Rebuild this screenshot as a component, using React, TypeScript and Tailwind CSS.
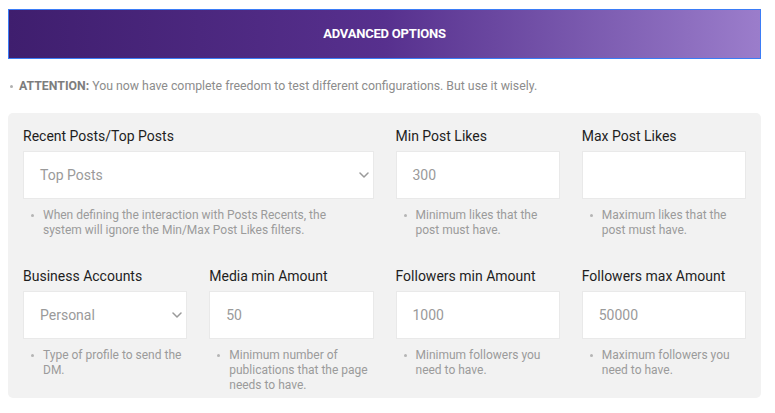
import React from 'react'

const font = { fontFamily: 'Roboto, "Noto Sans", sans-serif' }

function Chevron(){
  return (
    <svg width="10" height="6" viewBox="0 0 10 6" className="shrink-0">
      <path d="M1 1l4 4 4-4" fill="none" stroke="#9a9a9a" strokeWidth="1.5" strokeLinecap="round" strokeLinejoin="round"/>
    </svg>
  )
}

function Help({lines, narrow}:{lines:string; narrow?:boolean}){
  return (
    <div className="flex mt-[9px] pl-[8px] text-[12px] leading-[15px] text-[#9b9b9b]">
      <span className="w-[12px] shrink-0 pt-[6px]"><span className="block w-[3px] h-[3px] rounded-full bg-[#b5b5b5]"/></span>
      <span className={narrow ? 'max-w-[296px]' : ''}>{lines}</span>
    </div>
  )
}

type Field = { label:string; value?:string; select?:boolean; help:string; span?:boolean }

function FieldBox({f}:{f:Field}){
  return (
    <div className={f.span ? 'col-span-2' : ''}>
      <div className="text-[14px] leading-[20px] text-[#1e1e1e] mb-[5px] whitespace-nowrap">{f.label}</div>
      <div className="h-[48px] bg-white border border-[#e9e9e9] flex items-center pl-[16px] pr-[4px]">
        <span className="flex-1 text-[14px] text-[#9a9a9a]">{f.value}</span>
        {f.select && <Chevron/>}
      </div>
      <Help lines={f.help} narrow={f.span}/>
    </div>
  )
}

const row1:Field[] = [
  {label:'Recent Posts/Top Posts', value:'Top Posts', select:true, span:true, help:'When defining the interaction with Posts Recents, the system will ignore the Min/Max Post Likes filters.'},
  {label:'Min Post Likes', value:'300', help:'Minimum likes that the post must have.'},
  {label:'Max Post Likes', value:'', help:'Maximum likes that the post must have.'},
]
const row2:Field[] = [
  {label:'Business Accounts', value:'Personal', select:true, help:'Type of profile to send the DM.'},
  {label:'Media min Amount', value:'50', help:'Minimum number of publications that the page needs to have.'},
  {label:'Followers min Amount', value:'1000', help:'Minimum followers you need to have.'},
  {label:'Followers max Amount', value:'50000', help:'Maximum followers you need to have.'},
]

export default function App(){
  return (
    <div className="w-[775px] h-[413px] bg-white px-[8px] pt-[9px] overflow-hidden" style={font}>
      <div className="h-[50px] w-[753px] border border-[#3b7cf6] bg-linear-to-r from-[#3f1e6e] via-[#57308e] to-[#9b7dcb] flex items-center justify-center">
        <span className="text-white font-bold text-[13px] tracking-[-0.2px]">ADVANCED OPTIONS</span>
      </div>
      <div className="flex items-center h-[20px] mt-[17px] text-[12.3px] text-[#8c8c8c]">
        <span className="w-[3px] h-[3px] rounded-full bg-[#b0b0b0] ml-[2px] mr-[6px]"/>
        <span><b className="font-bold text-[#7d7d7d]">ATTENTION:</b> You now have complete freedom to test different configurations. But use it wisely.</span>
      </div>
      <div className="mt-[17px] w-[753px] h-[285px] bg-[#f2f2f2] rounded-[5px] px-[15px] pt-[13px]">
        <div className="grid grid-cols-4 gap-x-[22px]">
          {row1.map(f=> <FieldBox key={f.label} f={f}/>)}
        </div>
        <div className="grid grid-cols-4 gap-x-[22px] mt-[28px]">
          {row2.map(f=> <FieldBox key={f.label} f={f}/>)}
        </div>
      </div>
    </div>
  )
}
